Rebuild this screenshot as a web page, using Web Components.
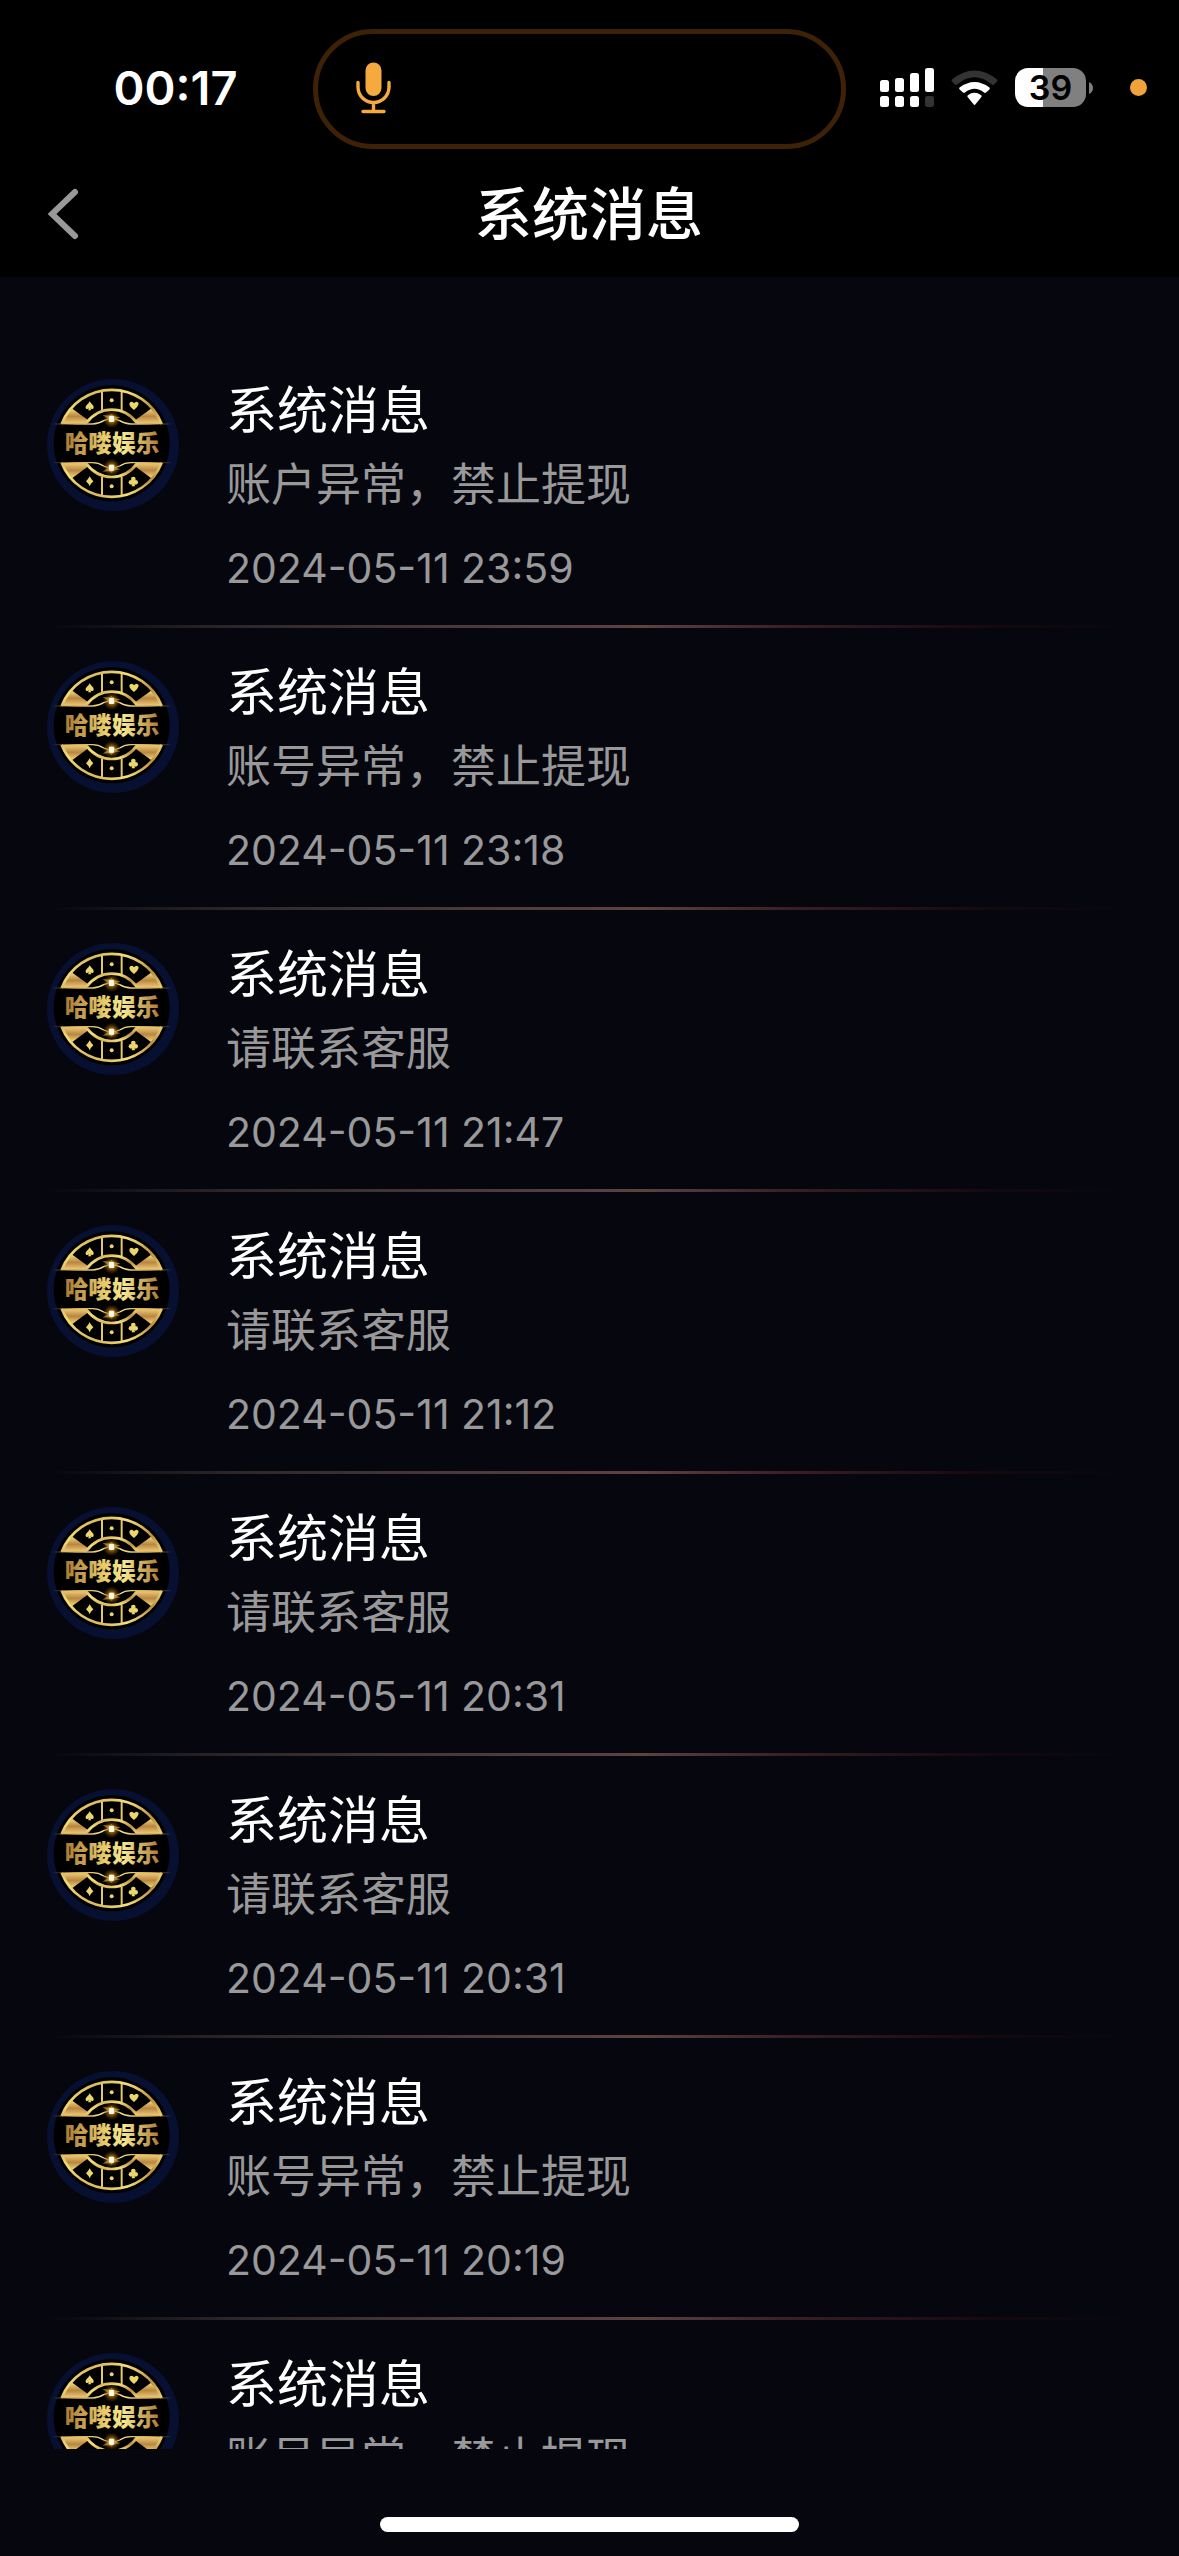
<!DOCTYPE html>
<html lang="zh-CN">
<head>
<meta charset="utf-8">
<meta name="viewport" content="width=device-width, initial-scale=1">
<title>系统消息</title>
<style>
  html, body { margin: 0; height: 100%; background: #06060f; }
  body { font-family: Inter, "Noto Sans CJK SC", sans-serif; color: #fff; }
</style>
</head>
<body>
<message-app>
  <status-bar slot="top" time="00:17" battery="39"></status-bar>
  <nav-bar slot="top">系统消息</nav-bar>
  <message-item><span slot="title">系统消息</span><span slot="text">账户异常，禁止提现</span><time slot="time" datetime="2024-05-11T23:59">2024-05-11 23:59</time></message-item>
  <message-item><span slot="title">系统消息</span><span slot="text">账号异常，禁止提现</span><time slot="time" datetime="2024-05-11T23:18">2024-05-11 23:18</time></message-item>
  <message-item><span slot="title">系统消息</span><span slot="text">请联系客服</span><time slot="time" datetime="2024-05-11T21:47">2024-05-11 21:47</time></message-item>
  <message-item><span slot="title">系统消息</span><span slot="text">请联系客服</span><time slot="time" datetime="2024-05-11T21:12">2024-05-11 21:12</time></message-item>
  <message-item><span slot="title">系统消息</span><span slot="text">请联系客服</span><time slot="time" datetime="2024-05-11T20:31">2024-05-11 20:31</time></message-item>
  <message-item><span slot="title">系统消息</span><span slot="text">请联系客服</span><time slot="time" datetime="2024-05-11T20:31">2024-05-11 20:31</time></message-item>
  <message-item><span slot="title">系统消息</span><span slot="text">账号异常，禁止提现</span><time slot="time" datetime="2024-05-11T20:19">2024-05-11 20:19</time></message-item>
  <message-item><span slot="title">系统消息</span><span slot="text">账号异常，禁止提现</span></message-item>
  <home-indicator slot="bottom"></home-indicator>
</message-app>

<script>
class BaseElement extends HTMLElement {
  connectedCallback() {
    if (this.shadowRoot) return;
    this.attachShadow({ mode: 'open' }).innerHTML = this.render();
  }
}

customElements.define('message-app', class extends BaseElement {
  render() {
    return `
      <style>
        :host { display: flex; flex-direction: column; height: 100vh; background: #06060f; }
        header { background: #000; flex: none; }
        main { flex: 1; min-height: 0; overflow: hidden; padding-top: 69px; box-sizing: border-box; }
        footer { flex: none; }
      </style>
      <header><slot name="top"></slot></header>
      <main><slot></slot></main>
      <footer><slot name="bottom"></slot></footer>`;
  }
});

customElements.define('status-bar', class extends BaseElement {
  render() {
    return `
      <style>
        :host { display: grid; grid-template-columns: minmax(0, 1fr) auto minmax(0, 1fr); align-items: center; height: 150px; padding: 28px 20px 0 0; box-sizing: border-box; }
        .side { display: flex; align-items: center; height: 120px; padding-bottom: 3px; box-sizing: border-box; }
        .time { justify-content: center; padding-left: 38px; font-size: 47px; line-height: 60px; font-weight: 600; }
        .island { width: 533px; height: 120px; box-sizing: border-box; border: 5px solid #3d2208; border-radius: 60px; display: flex; align-items: center; padding: 0 0 2px 38px; }
        .island svg { width: 35px; height: 52px; }
        .status { padding-left: 34px; gap: 17px; }
        .status > * { flex: none; }
        .battery { display: flex; align-items: center; gap: 3px; }
        .cell { width: 71px; height: 39px; border-radius: 13px; background: linear-gradient(90deg, #fff 40%, #808080 40%); color: #000; font-size: 34px; line-height: 39px; font-weight: 600; text-align: center; }
        .rec { width: 17px; height: 17px; border-radius: 50%; background: #f0a33c; margin-left: 20px; }
      </style>
      <div class="side time">${this.getAttribute('time')}</div>
      <div class="island">
        <svg viewBox="0 0 35 52" aria-hidden="true" fill="none" stroke="#f4aa3d" stroke-width="3.4" stroke-linecap="round">
          <rect x="9.5" y="0.5" width="16" height="33.500" rx="8" fill="#f4aa3d" stroke="none"/>
          <path d="M2 20.500V25a15.500 15.500 0 0 0 31 0V20.500M17.500 41V49.500M7 49.500H28"/>
        </svg>
      </div>
      <div class="side status">
        <svg width="54" height="39" viewBox="0 0 54 39" fill="#fff" aria-hidden="true">
          <rect x="0" y="12" width="9" height="12" rx="2.500"/><rect x="15" y="10" width="9" height="14" rx="2.500"/>
          <rect x="30" y="5" width="9" height="19" rx="2.500"/><rect x="45" y="0" width="9" height="24" rx="2.500"/>
          <rect x="0" y="28" width="9" height="11" rx="2.500"/><rect x="15" y="28" width="9" height="11" rx="2.500"/>
          <rect x="30" y="28" width="9" height="11" rx="2.500"/><rect x="45" y="28" width="9" height="11" rx="2.500" fill="#333"/>
        </svg>
        <svg width="47" height="36" viewBox="0 0 47 36" aria-hidden="true">
          <path d="M1 9.500Q0 10.500 1 11.500L4 14.500Q5 15.500 6 14.500Q23.500 0 41 14.500Q42 15.500 43 14.500L46 11.500Q47 10.500 46 9.500Q23.500-8.500 1 9.500Z" fill="#333"/>
          <path d="M8.500 17.500Q7.700 18.500 8.600 19.400L12 22.500Q13 23.300 14 22.500Q23.500 15 33 22.500Q34 23.300 35 22.500L38.400 19.400Q39.300 18.500 38.500 17.500Q23.500 6.500 8.500 17.500Z" fill="#fff"/>
          <path d="M16.800 25.200Q15.800 26.200 16.800 27.200L22.500 34.300Q23.500 35.500 24.500 34.300L30.200 27.200Q31.200 26.200 30.200 25.200Q23.500 20.500 16.800 25.200Z" fill="#fff"/>
        </svg>
        <div class="battery">
          <div class="cell">${this.getAttribute('battery')}</div>
          <svg width="4" height="12" viewBox="0 0 4 12" aria-hidden="true"><path d="M0 0Q4 2 4 6T0 12Z" fill="#808080"/></svg>
        </div>
        <div class="rec"></div>
      </div>`;
  }
});

customElements.define('nav-bar', class extends BaseElement {
  render() {
    return `
      <style>
        :host { display: grid; grid-template-columns: 1fr auto 1fr; align-items: center; height: 127px; padding: 0 48px 0 47px; box-sizing: border-box; }
        button { justify-self: start; display: flex; align-items: center; padding: 0; border: 0; background: none; height: 80px; }
        h1 { margin: 0; padding-top: 3px; font-size: 57px; line-height: 70px; font-weight: 500; }
      </style>
      <button type="button" aria-label="返回">
        <svg width="32" height="52" viewBox="0 0 32 52" fill="none" stroke="#999" stroke-width="6" stroke-linecap="round"><path d="M28 4L5 26L28 48"/></svg>
      </button>
      <h1><slot></slot></h1>`;
  }
});

customElements.define('chip-logo', class extends BaseElement {
  render() {
    return `
      <style>
        :host { display: block; width: 132px; height: 132px; }
        svg { display: block; width: 100%; height: 100%; }
        text { font-family: "Noto Sans CJK SC", sans-serif; font-size: 71px; font-weight: 900; }
      </style>
      <svg viewBox="22 39 396 396">
        <defs>
          <linearGradient id="metal" x1="0" y1="0" x2="1" y2="0">
            <stop offset="0" stop-color="#a97834"/><stop offset=".42" stop-color="#e6cb6c"/><stop offset=".62" stop-color="#f5e78f"/><stop offset="1" stop-color="#ab7a35"/>
          </linearGradient>
          <linearGradient id="ring" x1="0" y1="0" x2="1" y2="1">
            <stop offset="0" stop-color="#b88f3b"/><stop offset=".35" stop-color="#f5df7b"/><stop offset=".7" stop-color="#bd8f42"/><stop offset="1" stop-color="#ecd170"/>
          </linearGradient>
          <linearGradient id="wedge" x1="0" y1="0" x2="0" y2="1">
            <stop offset="0" stop-color="#f0db78"/><stop offset=".5" stop-color="#b98642"/><stop offset="1" stop-color="#efcf78"/>
          </linearGradient>
          <linearGradient id="edge" gradientUnits="userSpaceOnUse" x1="38" y1="0" x2="396" y2="0">
            <stop offset="0" stop-color="#c89d4a" stop-opacity="0"/><stop offset=".2" stop-color="#d1a650"/><stop offset=".5" stop-color="#fff0a0"/><stop offset=".8" stop-color="#d1a650"/><stop offset="1" stop-color="#c89d4a" stop-opacity="0"/>
          </linearGradient>
          <radialGradient id="glow"><stop offset="0" stop-color="#fff3b8"/><stop offset=".35" stop-color="#b87916" stop-opacity=".8"/><stop offset="1" stop-color="#6b3f00" stop-opacity="0"/></radialGradient>
          <g id="half">
            <path d="M66 174Q76 150 98 128L150 166Q144 170 140 174ZM366 174Q356 150 334 128L282 166Q288 170 292 174Z" fill="url(#wedge)"/>
            <path d="M187 75V132M246 75V132" stroke="#e3c768" stroke-width="6" fill="none"/>
            <path d="M66 174A161 161 0 0 1 366 174" stroke="url(#ring)" stroke-width="8" fill="none"/>
            <path d="M140 171Q170 131 216 131T292 171" stroke="url(#ring)" stroke-width="8" fill="none"/>
            <circle cx="216" cy="103" r="6" fill="#ead36c"/>
            <path d="M38 174H158Q176 174 192 164Q216 153 240 164Q256 174 274 174H396" stroke="url(#edge)" stroke-width="4" fill="none"/>
            <circle cx="216" cy="160" r="27" fill="url(#glow)"/>
            <path d="M188 147Q213 151 216 144Q219 151 242 154Q225 159 224 168H208Q209 158 188 147Z" fill="#e8b94e" opacity=".6"/>
            <rect x="208" y="150" width="15" height="18" rx="3" fill="#fffbe8"/>
          </g>
        </defs>
        <circle cx="220" cy="237" r="198" fill="#081031"/>
        <circle cx="216" cy="232" r="174" fill="#000"/>
        <use href="#half"/>
        <use href="#half" transform="translate(0 464) scale(1 -1)"/>
        <g fill="#ecd76c">
          <path d="M150 106Q154 113 161 119Q164 127 158 129Q154 130 152 127L155 133H145L148 127Q143 131 139 128Q135 123 141 117Q147 112 150 106Z"/>
          <path d="M283 132Q269 121 269 113Q270 107 276 107Q281 107 283 112Q286 107 291 107Q297 108 297 114Q295 122 283 132Z"/>
          <path d="M150 331Q154 339 161 346Q154 352 150 361Q146 352 139 346Q146 339 150 331Z"/>
          <circle cx="281" cy="339" r="7"/><circle cx="274" cy="349" r="7"/><circle cx="288" cy="349" r="7"/><path d="M280 344H283L286 361H276Z"/>
        </g>
        <text x="75" y="259" fill="url(#metal)">哈喽娱乐</text>
      </svg>`;
  }
});

customElements.define('message-item', class extends BaseElement {
  render() {
    return `
      <style>
        :host { display: block; padding: 0 47px; }
        article { display: flex; gap: 47px; padding: 33px 0; }
        chip-logo { flex: none; }
        .body { flex: 1; min-width: 0; }
        h2, p { margin: 0; font-weight: 400; }
        h2 { font-size: 51px; line-height: 64px; }
        p { color: #999; }
        .text { font-size: 45px; line-height: 60px; margin: 12px 0 29px; }
        .time { font-size: 41px; line-height: 48px; height: 48px; }
        .line { height: 3px; background: linear-gradient(90deg, #06060f 0, #2d2627 17%, #4a3a39 38%, #5e4240 55%, #3a2024 68%, #16090f 86%, #06060f 100%); }
      </style>
      <article>
        <chip-logo></chip-logo>
        <div class="body">
          <h2><slot name="title"></slot></h2>
          <p class="text"><slot name="text"></slot></p>
          <p class="time"><slot name="time"></slot></p>
        </div>
      </article>
      <div class="line"></div>`;
  }
});

customElements.define('home-indicator', class extends BaseElement {
  render() {
    return `
      <style>
        :host { display: flex; justify-content: center; align-items: flex-end; height: 107px; padding-bottom: 24px; box-sizing: border-box; }
        div { width: 419px; height: 15px; border-radius: 8px; background: #fff; }
      </style>
      <div></div>`;
  }
});
</script>
</body>
</html>
